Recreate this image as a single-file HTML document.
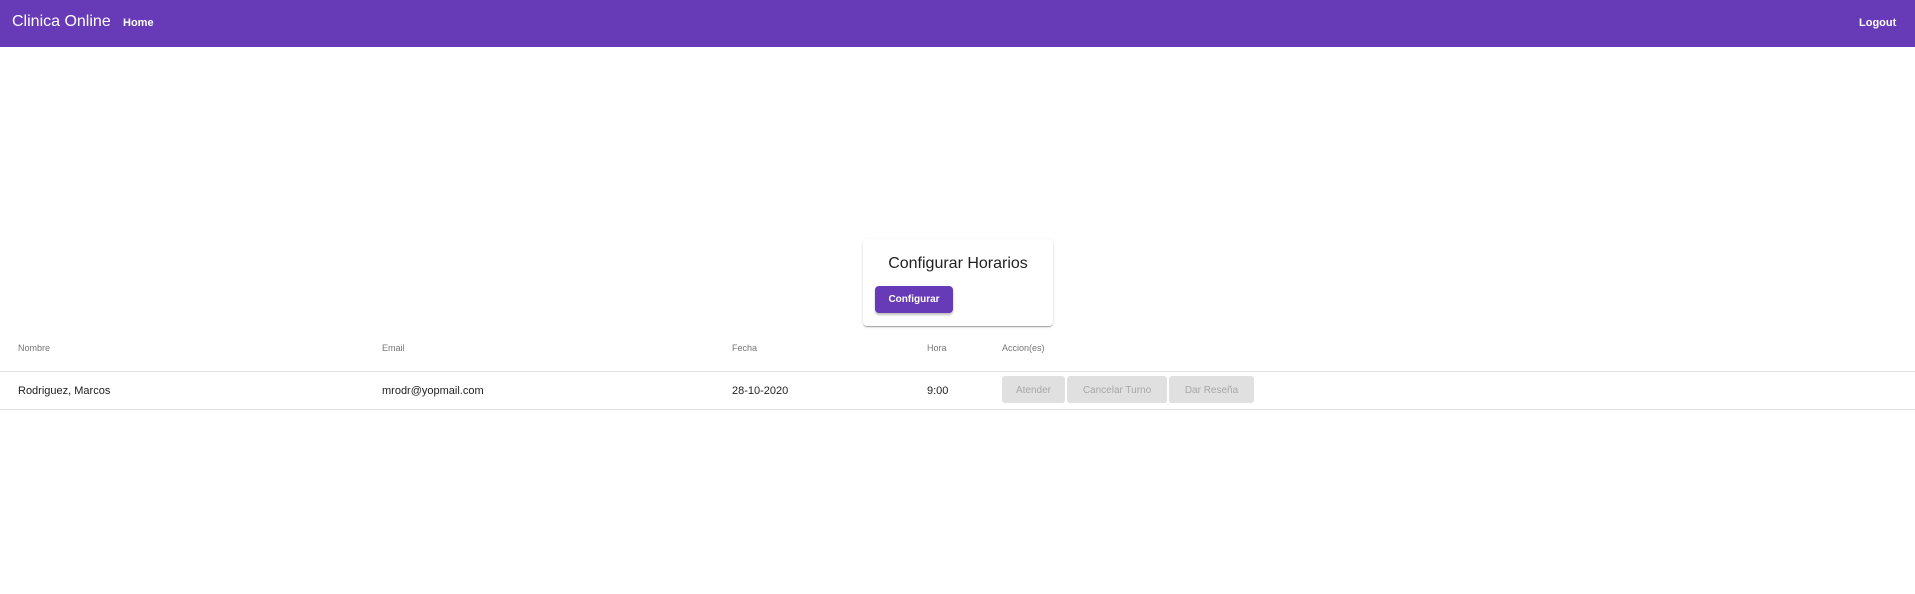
<!DOCTYPE html>
<html><head><meta charset="utf-8"><style>
*{box-sizing:border-box;margin:0;padding:0}
body{width:1915px;height:594px;background:#fff;font-family:"Liberation Sans",Arial,sans-serif;position:relative;overflow:hidden}
.nav{position:absolute;left:0;top:0;width:1915px;height:47px;background:#673ab7;color:#fff}
.t{position:absolute;left:12px;top:13px;font-size:16px}
.home{position:absolute;left:123px;top:17px;font-size:11px;font-weight:bold}
.logout{position:absolute;left:1859px;top:17px;font-size:11px;font-weight:bold}
.card{position:absolute;left:863px;top:239px;width:190px;height:87px;background:#fff;border-radius:4px;box-shadow:0 2px 1px -1px rgba(0,0,0,.2),0 1px 1px 0 rgba(0,0,0,.14),0 1px 3px 0 rgba(0,0,0,.12)}
.card h2{position:absolute;left:0;width:190px;text-align:center;top:16px;font-size:16px;font-weight:normal;color:#212121}
.btn{position:absolute;left:12px;top:47px;width:78px;height:27px;background:#673ab7;color:#fff;border-radius:4px;font-size:10px;font-weight:bold;text-align:center;line-height:28px;box-shadow:0 2px 2px rgba(0,0,0,.25)}
.h{position:absolute;top:343px;font-size:9px;color:#757575}
.line{position:absolute;left:0;width:1915px;height:1px;background:#e0e0e0}
.r{position:absolute;top:385px;font-size:11px;color:#212121}
.b{position:absolute;top:376px;height:27px;background:#e0e0e0;color:#a8a8a8;font-size:10px;text-align:center;line-height:29px;border-radius:3px}
</style></head><body>
<div class="nav"><span class="t">Clinica Online</span><span class="home">Home</span><span class="logout">Logout</span></div>
<div class="card"><h2>Configurar Horarios</h2><div class="btn">Configurar</div></div>
<span class="h" style="left:18px">Nombre</span>
<span class="h" style="left:382px">Email</span>
<span class="h" style="left:732px">Fecha</span>
<span class="h" style="left:927px">Hora</span>
<span class="h" style="left:1002px">Accion(es)</span>
<div class="line" style="top:371px"></div>
<span class="r" style="left:18px">Rodriguez, Marcos</span>
<span class="r" style="left:382px">mrodr@yopmail.com</span>
<span class="r" style="left:732px">28-10-2020</span>
<span class="r" style="left:927px">9:00</span>
<div class="b" style="left:1002px;width:63px">Atender</div>
<div class="b" style="left:1067px;width:100px">Cancelar Turno</div>
<div class="b" style="left:1169px;width:85px">Dar Reseña</div>
<div class="line" style="top:409px"></div>
</body></html>
